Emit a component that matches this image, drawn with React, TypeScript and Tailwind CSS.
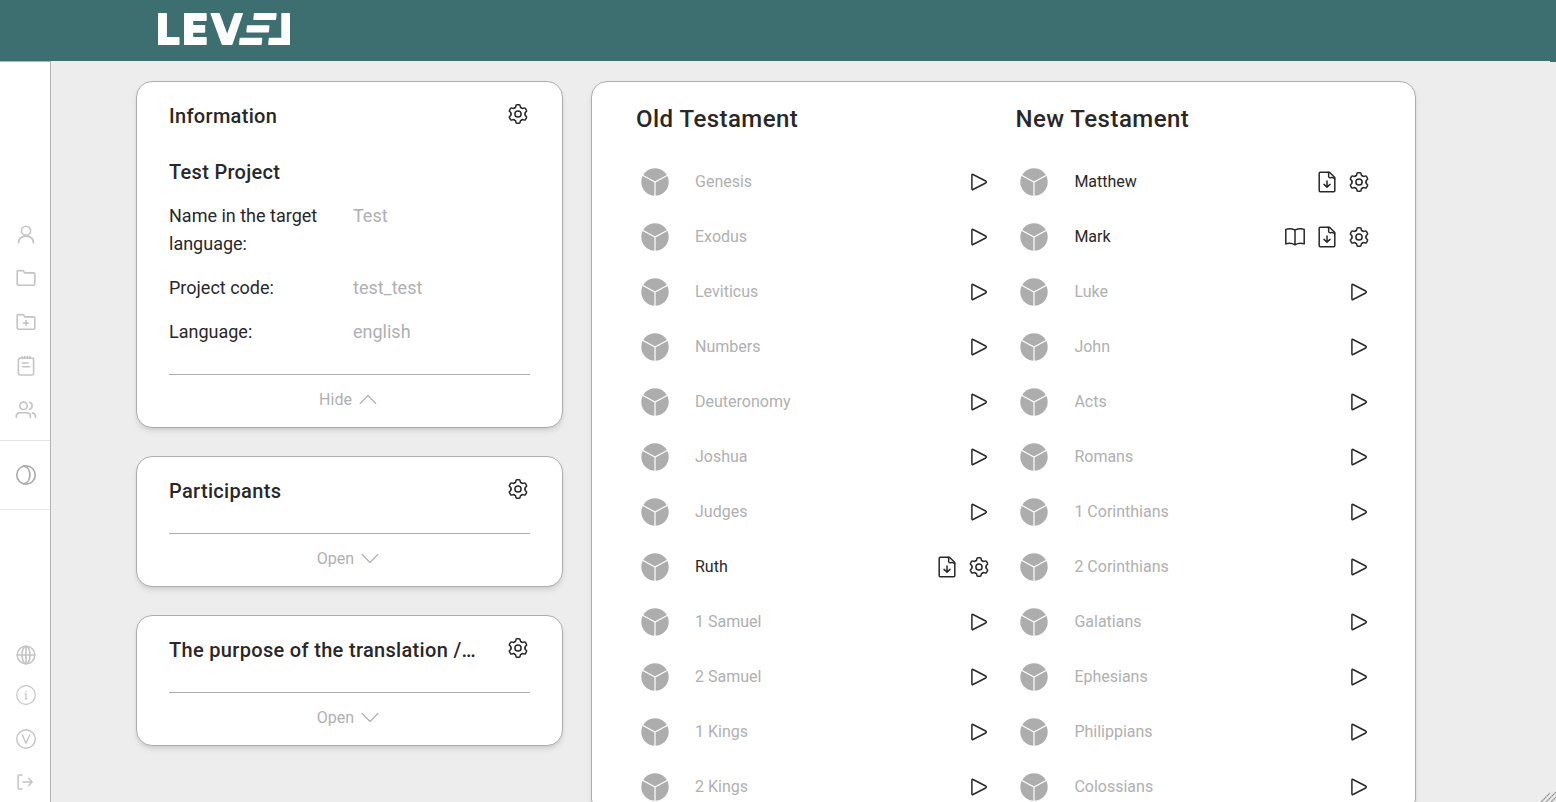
import type { ReactNode } from 'react';

const oldBooks = ['Genesis', 'Exodus', 'Leviticus', 'Numbers', 'Deuteronomy', 'Joshua', 'Judges', 'Ruth', '1 Samuel', '2 Samuel', '1 Kings', '2 Kings'];
const newBooks = ['Matthew', 'Mark', 'Luke', 'John', 'Acts', 'Romans', '1 Corinthians', '2 Corinthians', 'Galatians', 'Ephesians', 'Philippians', 'Colossians'];
const started = ['Ruth', 'Matthew', 'Mark'];

function Icon({ children, className = 'size-6', width = 1.5 }: { children: ReactNode; className?: string; width?: number }) {
  return (
    <svg viewBox="0 0 24 24" className={`block shrink-0 ${className}`} fill="none" stroke="currentColor" strokeWidth={width} strokeLinecap="round" strokeLinejoin="round">
      {children}
    </svg>
  );
}

function Gear() {
  return (
    <Icon width={1.5}>
      <circle cx="12" cy="12" r="3.1" />
      {[0, 60, 120, 180, 240, 300].map((a) => (
        <path key={a} transform={`rotate(${a} 12 12)`} d="M8.4 5.76C9.2 6.1 9.7 5.2 9.8 4.1Q9.9 2.8 10.9 2.8H13.1Q14.1 2.8 14.2 4.1C14.3 5.2 14.8 6.1 15.6 5.76" />
      ))}
    </Icon>
  );
}

function Download() {
  return (
    <Icon>
      <path d="M14.5 2.2H5.2Q4.2 2.2 4.2 3.2V20.8Q4.2 21.8 5.2 21.8H18.8Q19.8 21.8 19.8 20.8V7.5Z" />
      <path d="M13 2.4Q14.2 3.5 13.6 6Q13.5 7.8 15.4 7.7Q18.8 7.2 19.7 9M12 11V17M9 14.4L12 17.2L15 14.4" />
    </Icon>
  );
}

function Play() {
  return (
    <Icon>
      <path d="M4.9 5.2V18.8Q4.9 20 6 19.5L18.7 13Q20 12 18.7 11L6 4.5Q4.9 4 4.9 5.2Z" />
    </Icon>
  );
}

function Book() {
  return (
    <Icon>
      <path d="M12 5.1V19.8M12 5.1C9 3.6 5.5 3.6 2.8 4.4V18.9C5.5 18.1 9 18.1 12 19.8C15 18.1 18.5 18.1 21.2 18.9V4.4C18.5 3.6 15 3.6 12 5.1Z" />
    </Icon>
  );
}

function Logo() {
  return (
    <svg viewBox="0 0 132 33" className="block h-[33px] w-[132px]" fill="#fff" stroke="#fff" strokeWidth="1.4" strokeLinejoin="round">
      <path d="M.7.7H8.2V24.8H20.8V31.3H.7Z" />
      <path d="M26.7.7H48V7.2H34.5V12.6H46.5V19H34.5V24.8H48V31.3H26.7Z" />
      <path d="M53.2.7H61.1L69.2 22.8L77 .7H84.2L73.8 31.3H64.4Z" />
      <path d="M96.6.7H118L117.4 6.2H96Z" />
      <path d="M89.6 13H110.8L110.2 18.8H89Z" />
      <path d="M82.3 25.5H103.6L103 31.3H81.7Z" />
      <path d="M124 .7H131.3V31.3H110.9L111.4 25.5H124Z" />
    </svg>
  );
}

function Sidebar() {
  return (
    <aside className="flex w-[51px] shrink-0 flex-col border-t border-r border-[#b4b4b4] bg-white text-[#c4c4c4]">
      <div className="mt-40 flex flex-col items-center gap-5 pb-[18px] pl-0.5">
        <Icon width={1.6}><circle cx="12" cy="8.8" r="4.6" /><path d="M4.6 21Q4.6 14.1 12 14.1T19.4 21" /></Icon>
        <Icon width={1.6}><path d="M3.2 5.6Q3.2 4.6 4.2 4.6H8.7Q9.3 4.6 9.7 5.2L10.7 6.9H19.8Q20.8 6.9 20.8 7.9V18.2Q20.8 19.2 19.8 19.2H4.2Q3.2 19.2 3.2 18.2Z" /></Icon>
        <Icon width={1.6}><path d="M3.2 5.6Q3.2 4.6 4.2 4.6H8.7Q9.3 4.6 9.7 5.2L10.7 6.9H19.8Q20.8 6.9 20.8 7.9V18.2Q20.8 19.2 19.8 19.2H4.2Q3.2 19.2 3.2 18.2ZM12 10.6V15.6M9.5 13.1H14.5" /></Icon>
        <Icon width={1.6}><rect x="4.4" y="4" width="15.2" height="17" rx="2" /><path d="M8.2 2.5V4.4M10.7 2.5V4.4M13.3 2.5V4.4M15.8 2.5V4.4M8.4 9H14M8.4 12.8H15.6" /></Icon>
        <Icon width={1.6}><circle cx="9.5" cy="7.8" r="3.7" /><path d="M2.4 19.4V18Q2.4 14.7 6 14.7H12.8Q16.4 14.7 16.4 18V19.4M15.6 4.3A3.7 3.7 0 0 1 15.6 11.3M18.4 14.9Q21.6 15.4 21.6 19.4" /></Icon>
      </div>
      <div className="flex h-[70px] shrink-0 items-center justify-center border-y border-[#e5e5e5] pl-0.5 text-[#ababab]">
        <Icon width={1.7}><circle cx="12" cy="12" r="9.2" /><path d="M9.5 3.2C18 4 18 20 9.5 20.8" /></Icon>
      </div>
      <div className="mt-[133px] flex flex-col items-center pl-0.5">
        <Icon width={1.6}><circle cx="12" cy="12" r="8.8" /><ellipse cx="12" cy="12" rx="4" ry="8.8" /><path d="M12 3.2V20.8M3.2 12H20.8" /></Icon>
        <Icon width={1.2} className="mt-4 size-6"><circle cx="12" cy="12" r="9.3" /><path d="M12 10.8V15.8M11 10.8H12M11 16H13M12 8V8.3" /></Icon>
        <Icon width={1.4} className="mt-5 size-6"><circle cx="12" cy="12" r="9.3" /><path d="M8.4 8L12 16.2L15.6 8" /></Icon>
        <Icon width={1.5} className="mt-[19px] size-6"><path d="M8 5H5.3Q4.1 5 4.1 6.2V17.8Q4.1 19 5.3 19H8M9 12H18M14.8 8.6L18.1 12L14.8 15.4" /></Icon>
      </div>
    </aside>
  );
}

function Card({ title, open = false, children }: { title: string; open?: boolean; children?: ReactNode }) {
  return (
    <section className="rounded-2xl border border-[#adadad] bg-white px-8 pt-5 shadow-md">
      <div className="flex h-7 items-start justify-between">
        <h2 className="text-xl font-medium tracking-[0.32px] whitespace-nowrap">{title}</h2>
        <Gear />
      </div>
      {children}
      <div className="mt-7 flex h-[53px] items-center justify-center gap-[5px] border-t border-[#adadad] pr-px pb-0.5 text-[#b0b0b0]">
        <span className="text-base">{open ? 'Hide' : 'Open'}</span>
        <Icon width={1.3} className="size-[22px]">
          {open ? <path d="M3.5 15.8L12 7.1L20.5 15.8" /> : <path d="M3.5 7.1L12 15.8L20.5 7.1" />}
        </Icon>
      </div>
    </section>
  );
}

function Field({ label, value }: { label: string; value: string }) {
  return (
    <div className="flex text-lg leading-7">
      <span className="w-[184px] shrink-0 pr-6">{label}</span>
      <span className="text-[#b0b0b0]">{value}</span>
    </div>
  );
}

function Testament({ title, books }: { title: string; books: string[] }) {
  return (
    <div className="w-[379.4px] shrink-0">
      <h2 className="h-8 text-2xl font-medium tracking-[0.46px]">{title}</h2>
      <ul className="mt-[19px]">
        {books.map((book) => {
          const active = started.includes(book);
          return (
            <li key={book} className="flex h-[55px] items-center">
              <svg viewBox="0 0 28 28" className="ml-[5px] size-7 shrink-0">
                <circle cx="14" cy="14" r="13.7" fill="#adadad" />
                <path d="M1.5 7.2L14 14L26.5 7.2M14 14V28" fill="none" stroke="#fff" strokeWidth="1.2" />
              </svg>
              <span className={active ? 'ml-[26px] grow' : 'ml-[26px] grow text-[#b0b0b0]'}>{book}</span>
              <span className="mr-6 flex gap-2">
                {book === 'Mark' && <Book />}
                {active ? <><Download /><Gear /></> : <Play />}
              </span>
            </li>
          );
        })}
      </ul>
    </div>
  );
}

export default function App() {
  return (
    <div className="relative flex h-[802px] flex-col overflow-hidden bg-[#ededed] font-[Roboto,sans-serif] text-[#282828]">
      <header className="h-[61px] shrink-0 bg-[#3d6e70] pt-[13px] pl-[158px]"><Logo /></header>
      <div className="flex min-h-0 grow">
        <Sidebar />
        <main className="ml-[85px] flex items-start gap-7 pt-5">
          <div className="flex w-[427px] flex-col gap-7">
            <Card title="Information" open>
              <div className="mt-7 flex flex-col gap-4">
                <h3 className="text-xl font-medium tracking-[0.3px]">Test Project</h3>
                <Field label="Name in the target language:" value="Test" />
                <Field label="Project code:" value="test_test" />
                <Field label="Language:" value="english" />
              </div>
            </Card>
            <Card title="Participants" />
            <Card title="The purpose of the translation /…" />
          </div>
          <section className="flex w-[825px] rounded-2xl border border-[#adadad] bg-white px-11 pt-[21px] shadow-md">
            <Testament title="Old Testament" books={oldBooks} />
            <Testament title="New Testament" books={newBooks} />
          </section>
        </main>
      </div>
      <svg viewBox="0 0 16 12" className="absolute right-0 bottom-0 h-3 w-4" fill="none" stroke="#8b8b8b" strokeWidth="1.3" strokeDasharray="1.5 .5">
        <path d="M1 12L10 3M6 12L16 2M11 12L16 7" />
      </svg>
      <div className="absolute top-[61px] right-0 h-px w-1.5 bg-[#3d6e70]" />
    </div>
  );
}
